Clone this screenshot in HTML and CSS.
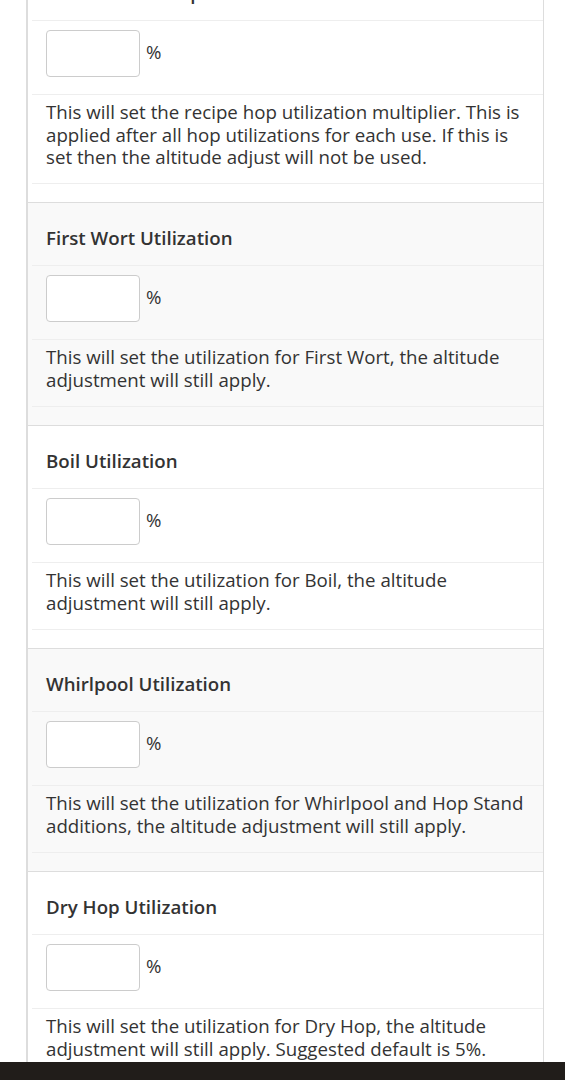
FILE: index.html
```html
<!DOCTYPE html>
<html lang="en">
<head>
<meta charset="utf-8">
<title>Hop Utilization Settings</title>
<link rel="stylesheet" href="styles.css">
</head>
<body>
<div class="card">
  <section class="sect">
    <div class="row title">Utilization Multiplier</div>
    <div class="row inputrow"><span class="box"></span><span class="unit">%</span></div>
    <div class="row desc">This will set the recipe hop utilization multiplier. This is applied after all hop utilizations for each use. If this is set then the altitude adjust will not be used.</div>
  </section>
  <section class="sect striped">
    <div class="row title">First Wort Utilization</div>
    <div class="row inputrow"><span class="box"></span><span class="unit">%</span></div>
    <div class="row desc">This will set the utilization for First Wort, the altitude adjustment will still apply.</div>
  </section>
  <section class="sect">
    <div class="row title">Boil Utilization</div>
    <div class="row inputrow"><span class="box"></span><span class="unit">%</span></div>
    <div class="row desc">This will set the utilization for Boil, the altitude adjustment will still apply.</div>
  </section>
  <section class="sect striped">
    <div class="row title">Whirlpool Utilization</div>
    <div class="row inputrow"><span class="box"></span><span class="unit">%</span></div>
    <div class="row desc">This will set the utilization for Whirlpool and Hop Stand additions, the altitude adjustment will still apply.</div>
  </section>
  <section class="sect">
    <div class="row title">Dry Hop Utilization</div>
    <div class="row inputrow"><span class="box"></span><span class="unit">%</span></div>
    <div class="row desc">This will set the utilization for Dry Hop, the altitude adjustment will still apply. Suggested default is 5%.</div>
  </section>
</div>
<div class="navbar"></div>
</body>
</html>
```
FILE: styles.css
```css
html, body {
  margin: 0;
  padding: 0;
  background: #ffffff;
}
body {
  font-family: "Open Sans", "Noto Sans", sans-serif;
  color: #333333;
  font-size: 18.7px;
  line-height: 22.5px;
}
.card {
  margin: -43px 21px 0 26px;
  border-left: 2px solid #dddddd;
  border-right: 1px solid #dddddd;
}
.sect {
  border-top: 1px solid #dddddd;
  padding: 0 0 18px 4px;
  background: #ffffff;
}
.sect.striped {
  background: #f9f9f9;
}
.row {
  padding: 0 14px;
}
.title {
  font-weight: 600;
  line-height: 23px;
  padding-top: 23px;
  padding-bottom: 16px;
}
.inputrow {
  border-top: 1px solid #eeeeee;
  padding-top: 9px;
  padding-bottom: 17px;
  display: flex;
  align-items: center;
  gap: 6px;
}
.box {
  display: block;
  width: 92px;
  height: 45px;
  border: 1px solid #cccccc;
  border-radius: 4px;
  background: #ffffff;
}
.unit {
  font-size: 18.7px;
  margin-bottom: 2px;
}
.desc {
  border-top: 1px solid #eeeeee;
  border-bottom: 1px solid #eeeeee;
  padding-top: 6px;
  padding-bottom: 15px;
}
.sect:first-child .desc {
  padding-bottom: 14.5px;
}
.navbar {
  position: fixed;
  left: 0;
  right: 0;
  bottom: 0;
  height: 18px;
  background: #211d1a;
}
```
